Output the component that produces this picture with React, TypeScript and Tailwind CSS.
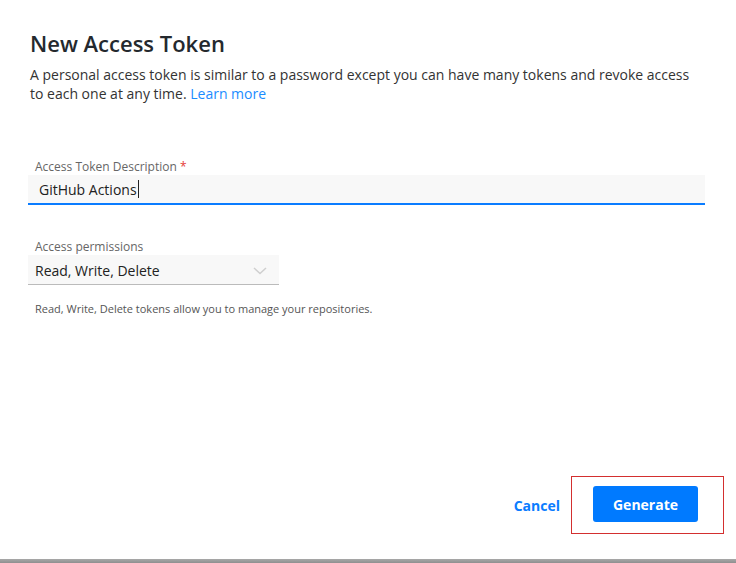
import React from "react";

export default function App() {
  return (
    <div
      className="flex h-[563px] w-[736px] flex-col bg-white text-[#2d2d2d]"
      style={{ fontFamily: '"Open Sans", "Noto Sans", sans-serif' }}
    >
      <div className="flex-1 pl-[28px] pr-[31px] pt-[29px]">
        <h1 className="ml-[2px] text-[22px] font-semibold leading-[28px] text-[#24292e]">
          New Access Token
        </h1>
        <p className="ml-[2px] mt-[8px] text-[14px] leading-[19px] text-[#333]">
          A personal access token is similar to a password except you can have many tokens and revoke access
          to each one at any time.{" "}
          <a className="text-[#1a8cff]" href="#">
            Learn more
          </a>
        </p>

        <div className="mt-[55px]">
          <label className="ml-[7px] block pt-[1px] text-[12px] leading-[16px] text-[#666]">
            Access Token Description <span className="text-[#e53935]">*</span>
          </label>
          <div className="flex h-[30px] items-center border-b-2 border-[#0a7cff] bg-[#f8f8f8] pl-[11px] text-[14px] text-[#222]">
            <span>GitHub Actions</span>
            <span className="ml-[1px] inline-block h-[18px] w-[1px] bg-[#222]" />
          </div>
        </div>

        <div className="mt-[33px]">
          <label className="ml-[7px] block pt-[1px] text-[12px] leading-[16px] text-[#666]">Access permissions</label>
          <div className="flex h-[30px] w-[251px] items-center justify-between border-b border-[#bbb] bg-[#f8f8f8] pl-[7px] pr-[12px] pt-[2px] text-[14px] text-[#222]">
            <span>Read, Write, Delete</span>
            <svg width="14" height="8" viewBox="0 0 14 8" fill="none">
              <path d="M1 1l6 5.5L13 1" stroke="#cfcfcf" strokeWidth="1.5" />
            </svg>
          </div>
          <p className="ml-[7px] mt-[16px] text-[11px] leading-[16px] text-[#555]">
            Read, Write, Delete tokens allow you to manage your repositories.
          </p>
        </div>
      </div>

      <div className="flex items-center justify-end pb-[25px] pr-[12px]">
        <button className="mr-[11px] text-[14px] font-bold text-[#0a7cff]">Cancel</button>
        <div className="border border-[#d32f2f] pb-[11px] pl-[21px] pr-[25px] pt-[9px]">
          <button className="h-[36px] w-[105px] rounded-[3px] bg-[#007aff] text-[14px] font-bold text-white">
            Generate
          </button>
        </div>
      </div>
      <div className="h-[4px] bg-gradient-to-b from-[#a8a8a8] to-[#8f8f8f]" />
    </div>
  );
}
